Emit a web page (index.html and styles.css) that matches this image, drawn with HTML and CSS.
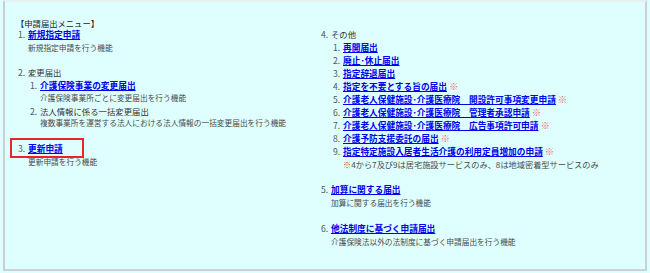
FILE: index.html
```html
<!DOCTYPE html>
<html lang="ja">
<head>
<meta charset="utf-8">
<link rel="stylesheet" href="styles.css">
</head>
<body>
<div class="box">
  <div class="title">【申請届出メニュー】</div>
  <div class="cols">
    <ol class="menu left">
      <li class="item">
        <span class="num">1.</span><a href="#">新規指定申請</a>
        <div class="desc">新規指定申請を行う機能</div>
      </li>
      <li class="item">
        <span class="num">2.</span><span class="head">変更届出</span>
        <ol class="sub">
          <li><span class="num">1.</span><a href="#">介護保険事業の変更届出</a>
            <div class="desc">介護保険事業所ごとに変更届出を行う機能</div></li>
          <li><span class="num">2.</span><span class="head">法人情報に係る一括変更届出</span>
            <div class="desc">複数事業所を運営する法人における法人情報の一括変更届出を行う機能</div></li>
        </ol>
      </li>
      <li class="item">
        <span class="hl"><span class="num">3.</span><a href="#">更新申請</a></span>
        <div class="desc">更新申請を行う機能</div>
      </li>
    </ol>
    <ol class="menu right">
      <li class="item">
        <span class="num">4.</span><span class="head">その他</span>
        <ol class="sub">
          <li><span class="num">1.</span><a href="#">再開届出</a></li>
          <li><span class="num">2.</span><a href="#">廃止･休止届出</a></li>
          <li><span class="num">3.</span><a href="#">指定辞退届出</a></li>
          <li><span class="num">4.</span><a href="#">指定を不要とする旨の届出</a> <span class="mark">※</span></li>
          <li><span class="num">5.</span><a href="#">介護老人保健施設･介護医療院　開設許可事項変更申請</a> <span class="mark">※</span></li>
          <li><span class="num">6.</span><a href="#">介護老人保健施設･介護医療院　管理者承認申請</a> <span class="mark">※</span></li>
          <li><span class="num">7.</span><a href="#">介護老人保健施設･介護医療院　広告事項許可申請</a> <span class="mark">※</span></li>
          <li><span class="num">8.</span><a href="#">介護予防支援委託の届出</a> <span class="mark">※</span></li>
          <li><span class="num">9.</span><a href="#">指定特定施設入居者生活介護の利用定員増加の申請</a> <span class="mark">※</span></li>
        </ol>
        <div class="note"><span class="mark2">※</span>4から7及び9は居宅施設サービスのみ、8は地域密着型サービスのみ</div>
      </li>
      <li class="item">
        <span class="num">5.</span><a href="#">加算に関する届出</a>
        <div class="desc">加算に関する届出を行う機能</div>
      </li>
      <li class="item">
        <span class="num">6.</span><a href="#">他法制度に基づく申請届出</a>
        <div class="desc">介護保険法以外の法制度に基づく申請届出を行う機能</div>
      </li>
    </ol>
  </div>
</div>
</body>
</html>
```
FILE: styles.css
```css
html, body {
  margin: 0;
  padding: 0;
  background: #dfffff;
}
body {
  padding: 0 3px;
  font-family: "Noto Sans CJK JP", sans-serif;
  color: #3a3a3a;
}
.box {
  box-sizing: border-box;
  height: 271px;
  border: 2px solid #c9d3d3;
  border-top-color: #e6f2f2;
  border-left-color: #c6d0d0;
  padding: 16px 0 0 11px;
}
.title {
  font-size: 8.3px;
  line-height: 10px;
  color: #222;
}
.cols {
  display: grid;
  grid-template-columns: 305px 1fr;
}
.menu {
  list-style: none;
  margin: 0;
  padding: 0;
}
.item {
  font-size: 8.6px;
  line-height: 12.8px;
  margin-bottom: 12.6px;
}
.left .item {
  padding-left: 2px;
  line-height: 12.5px;
  margin-bottom: 12.4px;
}
.num {
  display: inline-block;
  width: 10px;
  color: #555;
}
a {
  color: #0000f0;
  font-weight: bold;
  font-size: 8.7px;
  text-decoration: underline;
}
.head {
  color: #333;
  font-size: 8.4px;
}
.desc {
  font-size: 7.7px;
  padding-left: 10px;
  color: #4a4a4a;
}
.sub {
  list-style: none;
  margin: 0;
  padding: 0 0 0 12px;
}
.right .sub li {
  line-height: 13px;
}
.hl {
  outline: 2px solid #e8242a;
  padding: 2px 19px 2px 6px;
  margin-left: -6px;
  margin-right: -19px;
}
.mark {
  color: #f56b6b;
  font-size: 9.5px;
}
.note {
  font-size: 8.2px;
  padding-left: 22px;
  color: #4a4a4a;
}
.mark2 {
  color: #f03a3a;
}
```
